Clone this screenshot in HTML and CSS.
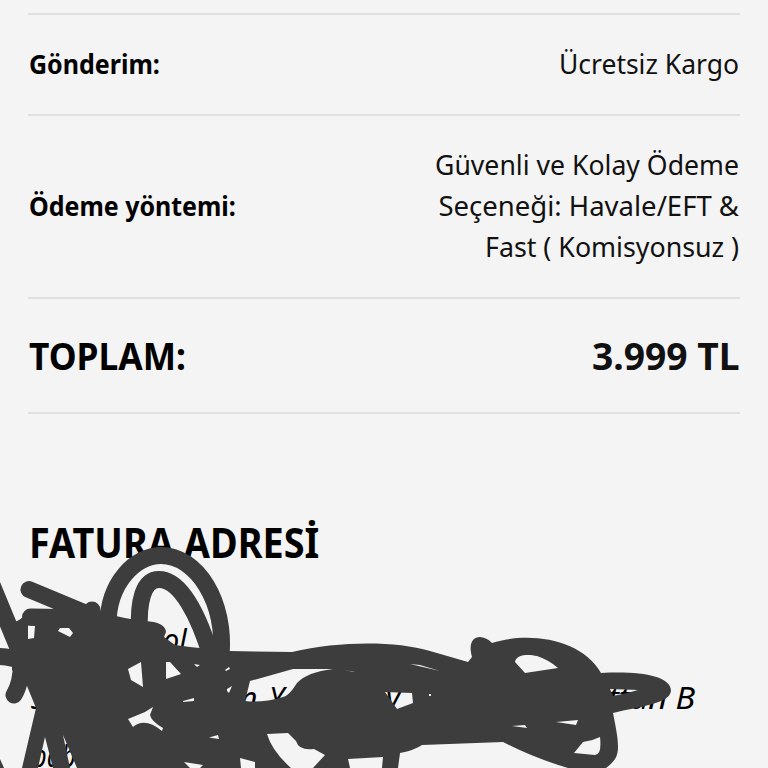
FILE: index.html
```
<!DOCTYPE html>
<html lang="tr">
<head>
<meta charset="utf-8">
<title>Sipariş özeti</title>
<link rel="stylesheet" href="styles.css">
</head>
<body>
<main class="order">
  <dl class="summary">
    <div class="row shipping"><dt><span class="fit" data-width="131">Gönderim:</span></dt><dd><span class="fit" data-width="180">Ücretsiz Kargo</span></dd></div>
    <div class="row payment"><dt><span class="fit" data-width="207">Ödeme yöntemi:</span></dt><dd><span class="fit" data-width="304">Güvenli ve Kolay Ödeme</span><span class="fit" data-width="301">Seçeneği: Havale/EFT &amp;</span><span class="fit" data-width="254">Fast ( Komisyonsuz )</span></dd></div>
    <div class="row total"><dt><span class="fit" data-width="157">TOPLAM:</span></dt><dd><span class="fit" data-width="148">3.999 TL</span></dd></div>
  </dl>
  <section class="billing">
    <h2><span class="fit" data-width="290">FATURA ADRESİ</span></h2>
    <address>
      <div class="line first"><span class="fit" data-width="24">ol</span></div>
      <div class="line second"><span>s</span><span>n</span><span>Y</span><span>y</span><span class="fit" data-width="87">ttan B</span></div>
      <div class="line third"><span class="fit" data-width="44">bab</span></div>
    </address>
  </section>
  <svg class="scribble" viewBox="0 0 768 768" aria-hidden="true">
    <path fill-rule="evenodd" d="M19 620 L30 612 L83 607 L100 612 Q125 619 145 621 Q165 622 166 632 L164 637 L175 645 L190 647 L228 651 L292 652 C340 641 395 641 430 651 L468 662 L472 657 C466 636 481 632 492 643 C529 631 582 639 601 673 C638 671 671 675 671 691 C669 704 641 706 613 713 C621 752 620 757 606 768 L568 768 Q534 758 503 742 L422 745 Q415 750 400 753 L398 768 L382 768 L383 757 L348 759 L350 768 L313 768 L325 755 L314 749 Q299 751 296 741 L288 733 L267 734 Q272 751 291 768 L255 768 L255 762 L240 758 L241 768 L200 768 L203 765 L184 762 L190 768 L77 768 L63 735 L70 768 L53 768 L45 737 L38 768 L22 768 L36 708 L27 686 L12 670 L12 648 L15 622Z
    M28 625.500 L35 626 L34 638 L28 639Z M58 631 L60 628 L69 628 L73 633 L70 637Z
    M128 669 L141 662 L143 687 L131 680Z M166 662 L170 662 L181 674 L166 679Z
    M194 664 L200 665 L197 667Z M225 670 L229 667 L230 669 L226 671Z M227 689 L232 686 L229 693 L227 691Z
    M183 701 L194 698 L194 701 L183 702Z M128 719 L145 712 L153 707 L150 715 Q151 721 163 728 L162 731 Q145 717 133 727Z
    M209 737.500 L218 735 L219 739Z M250 681 L293 669 L333 669 Q307 672 297 683 Q289 696 283 697 Q263 703 245 701Z
    M343 670 L355 672 L350 671Z M410 664 L420 665 L440 671Z M385 692 L412 693 L413 703 L397 709Z M429 694 h2 v2 h-2Z
    M515 662 C516 654 529 654 537 656 Q549 660 558 668 L525 673Z M610 689 L638 690 L627 693 L613 696Z
    M512 726 L525 725 L527 728Z M556 722 L578 720 L576 725Z M574 753 L583 742 Q592 741 600 737 Q602 755 595 755Z"/>
    <path d="M0 759 L4 768 H0Z"/>
    <g class="strokes">
      <path d="M108 625 C108 582 136 555.500 161 555.500 C197 555.500 226 602 221 656"/>
      <path d="M139.500 632 C138 602 143 579.500 159 579.500 C181 579.500 199 617 211 656"/>
      <path d="M29 589.500 L95 617 M30.500 617 L90 618 M92 610 V618"/>
      <path d="M-10 580 L21 655 M-4 656.500 Q10 656 24 662 M22 661 Q21 684 14 695"/>
    </g>
  </svg>
</main>
<script src="fit.js"></script>
</body>
</html>
```
FILE: styles.css
```
* { box-sizing: border-box; }
body { margin: 0; background: #f4f4f4; color: #111; font-family: "Noto Sans", sans-serif; }
.order { position: relative; width: 768px; height: 768px; padding: 13px 28px 0; overflow: hidden; }
.summary { margin: 0; border-top: 2px solid #e0e0e0; }
.row { display: flex; align-items: center; justify-content: space-between; border-bottom: 2px solid #e0e0e0; padding: 0 1px; font-size: 27.5px; line-height: 41px; }
.shipping { height: 101px; padding-bottom: 3px; }
.payment { height: 183px; padding-bottom: 2px; }
.total { height: 115px; padding-right: 0; padding-bottom: 1px; font-size: 38px; font-weight: 700; }
dt { color: #000; font-weight: 700; }
dd { margin: 0; display: flex; flex-direction: column; align-items: flex-end; }
.fit { display: inline-block; white-space: nowrap; transform-origin: left center; }
dd .fit { transform-origin: right center; }
h2 { margin: 98px 0 0 1px; color: #000; font-size: 42px; line-height: 60px; }
address { margin-top: 39px; color: #000; font-size: 30px; line-height: 58px; }
.line { height: 58px; display: flex; }
.first { padding-left: 135px; }
.second { display: grid; grid-template-columns: 209px 29px 117px 222px 1fr; justify-items: start; padding-left: 3px; }
.third { padding-left: 4px; }
.scribble { position: absolute; inset: 0; width: 768px; height: 768px; fill: #3d3d3d; }
.strokes { fill: none; stroke: #3d3d3d; stroke-width: 17; stroke-linecap: round; stroke-linejoin: round; }
```
FILE: fit.js
```
document.querySelectorAll('.fit').forEach((label) => {
  label.style.transform = `scaleX(${label.dataset.width / label.offsetWidth})`;
});
```
